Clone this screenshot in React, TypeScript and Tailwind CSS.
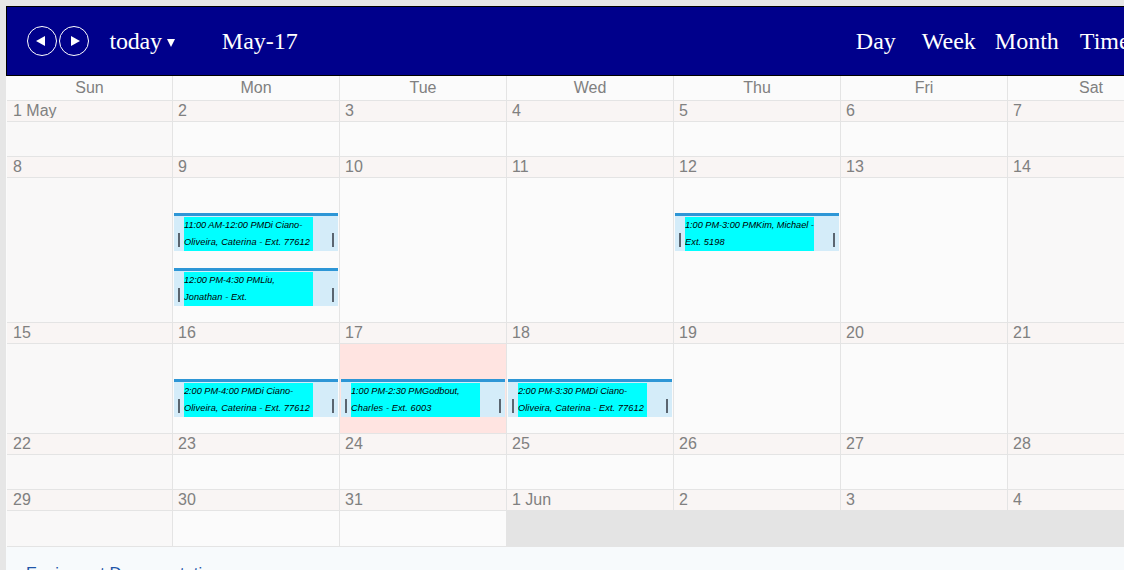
type Appt = { time: string; name: string; ext: string };

type Day = { label: string; today?: boolean; off?: boolean; appt?: Appt };

const weeks: { body: string; days: Day[] }[] = [
  {
    body: 'h-[35px]',
    days: ['1 May', '2', '3', '4', '5', '6', '7'].map((label) => ({ label })),
  },
  {
    body: 'h-[145px]',
    days: [
      { label: '8' },
      { label: '9' },
      { label: '10' },
      { label: '11' },
      {
        label: '12',
        appt: { time: '1:00 PM-3:00 PM', name: 'Kim, Michael -', ext: 'Ext. 5198' },
      },
      { label: '13' },
      { label: '14' },
    ],
  },
  {
    body: 'h-[90px]',
    days: [
      { label: '15' },
      {
        label: '16',
        appt: { time: '2:00 PM-4:00 PM', name: 'Di Ciano-', ext: 'Oliveira, Caterina - Ext. 77612' },
      },
      {
        label: '17',
        today: true,
        appt: { time: '1:00 PM-2:30 PM', name: 'Godbout,', ext: 'Charles - Ext. 6003' },
      },
      {
        label: '18',
        appt: { time: '2:00 PM-3:30 PM', name: 'Di Ciano-', ext: 'Oliveira, Caterina - Ext. 77612' },
      },
      { label: '19' },
      { label: '20' },
      { label: '21' },
    ],
  },
  {
    body: 'h-[35px]',
    days: ['22', '23', '24', '25', '26', '27', '28'].map((label) => ({ label })),
  },
  {
    body: 'h-[36px]',
    days: [
      { label: '29' },
      { label: '30' },
      { label: '31' },
      { label: '1 Jun', off: true },
      { label: '2', off: true },
      { label: '3', off: true },
      { label: '4', off: true },
    ],
  },
];

function colClass(j: number) {
  return j === 0
    ? 'w-[166px] shrink-0 border-r border-[#e4e4e4]'
    : 'w-[167px] shrink-0 border-r border-[#e4e4e4]';
}

function Event({ appt }: { appt: Appt }) {
  return (
    <div className="mx-px flex h-[38px] w-[164px] border-t-[3px] border-[#2d96d6] bg-[#d4ecf9] pt-px">
      <span className="mt-[16px] ml-[4px] h-[14px] w-[2px] shrink-0 bg-[#5a6570]" />
      <div className="ml-[4px] h-[34px] w-[129px] shrink-0 overflow-hidden bg-[#00ffff] font-['Liberation_Sans',sans-serif] text-[9.2px] leading-[17px] text-black italic">
        <div className="whitespace-nowrap tracking-[-0.03px]">
          {appt.time}
          {appt.name}
        </div>
        <div className="whitespace-nowrap tracking-[0.09px]">{appt.ext}</div>
      </div>
      <span className="mt-[16px] ml-[19px] h-[14px] w-[2px] shrink-0 bg-[#5a6570]" />
    </div>
  );
}

export default function App() {
  return (
    <div className="h-[570px] w-[1124px] overflow-hidden bg-[#e6e6e6] pt-[6px] pl-[6px]">
      <div className="w-[1200px]">
        <div className="flex h-[70px] items-center border border-black bg-[#00008b] font-['Liberation_Serif',serif] text-[24px] text-white">
          <div className="ml-[20px] flex gap-[2px]">
            <button className="flex h-[30px] w-[30px] items-center justify-center rounded-full border border-white">
              <span className="mr-[3px] h-0 w-0 border-y-[5px] border-r-[9px] border-y-transparent border-r-white" />
            </button>
            <button className="flex h-[30px] w-[30px] items-center justify-center rounded-full border border-white">
              <span className="ml-[3px] h-0 w-0 border-y-[5px] border-l-[9px] border-y-transparent border-l-white" />
            </button>
          </div>
          <span className="ml-[20.5px] tracking-[-0.2px]">today</span>
          <span className="ml-[5px] h-0 w-0 translate-y-[2px] border-x-[4.5px] border-t-[8px] border-x-transparent border-t-white" />
          <span className="ml-[47px]">May-17</span>
          <div className="ml-[558px] flex">
            <span>Day</span>
            <span className="ml-[26px]">Week</span>
            <span className="ml-[19px]">Month</span>
            <span className="ml-[21px]">Timeline</span>
          </div>
        </div>

        <div className="bg-[#fbfbfb] pl-px font-['Liberation_Sans',Arial,sans-serif] text-[#808080]">
          <div className="flex h-[25px] border-b border-[#e4e4e4]">
            {['Sun', 'Mon', 'Tue', 'Wed', 'Thu', 'Fri', 'Sat'].map((d, j) => (
              <div key={d} className={`${colClass(j)} text-center text-[16px] leading-[23px]`}>
                {d}
              </div>
            ))}
          </div>

          {weeks.map((week, i) => (
            <div key={i}>
              <div className="flex h-[21px] border-b border-[#e4e4e4] bg-[#f9f5f4]">
                {week.days.map((day, j) => (
                  <div
                    key={day.label}
                    className={`${colClass(j)} ${j === 0 ? 'pl-[6px]' : 'pl-[5px]'} text-[16px] leading-[20px]`}
                  >
                    <div className="h-[17px] overflow-hidden">{day.label}</div>
                  </div>
                ))}
              </div>
              <div className={`flex ${week.body} border-b border-[#e4e4e4]`}>
                {week.days.map((day, j) => (
                  <div
                    key={day.label}
                    className={`${colClass(j)} ${day.today ? 'bg-[#ffe4e1]' : ''} ${
                      day.off ? 'border-r-0 bg-[#e4e4e4]' : j === 0 || j === 6 ? 'bg-[#f9f8f8]' : ''
                    }`}
                  >
                    {i === 1 && j === 1 ? (
                      <div className="flex flex-col gap-[17px] pt-[35px]">
                        <Event appt={{ time: '11:00 AM-12:00 PM', name: 'Di Ciano-', ext: 'Oliveira, Caterina - Ext. 77612' }} />
                        <Event appt={{ time: '12:00 PM-4:30 PM', name: 'Liu,', ext: 'Jonathan - Ext.' }} />
                      </div>
                    ) : day.appt ? (
                      <div className="pt-[35px]">
                        <Event appt={day.appt} />
                      </div>
                    ) : null}
                  </div>
                ))}
              </div>
            </div>
          ))}
        </div>

        <div className="h-[24px] overflow-hidden bg-[#f7fafc] pt-[16px] pl-[20px] font-['Liberation_Sans',Arial,sans-serif] text-[16.5px] leading-[20px] text-[#1f55a8]">
          Equipment Documentation
        </div>
      </div>
    </div>
  );
}
